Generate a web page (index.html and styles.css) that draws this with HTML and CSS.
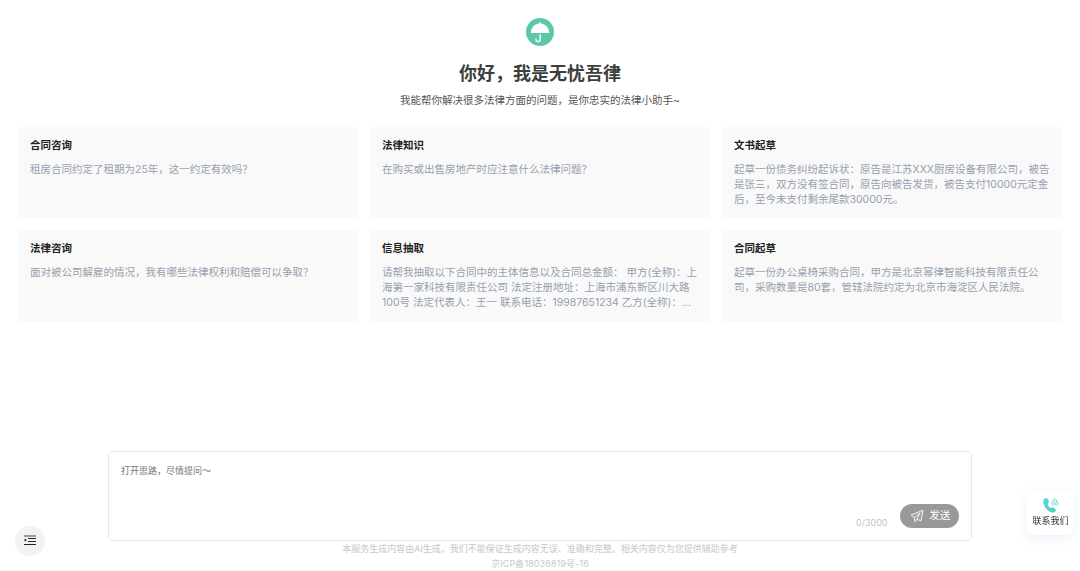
FILE: index.html
```html
<!DOCTYPE html>
<html lang="zh-CN">
<head>
    <meta charset="UTF-8">
    <meta name="viewport" content="width=device-width, initial-scale=1.0">
    <title>无忧吾律</title>
    <link rel="stylesheet" href="styles.css">
</head>
<body>
    <div class="page">
        <header class="intro">
            <svg class="logo" viewBox="0 0 28 28">
                <circle cx="14" cy="14" r="14" fill="#5bc8aa"/>
                <path d="M4.8 15C5 9.4 8.6 5.8 13.3 5.4V4.2h1.4v1.2C19.4 5.8 23 9.4 23.2 15z" fill="#fff"/>
                <path d="M14.2 16.2v5.3a2.1 2.1 0 0 1-4.2 0v-.8" fill="none" stroke="#fff" stroke-width="1.4"/>
            </svg>
            <h1>你好，我是无忧吾律</h1>
            <p>我能帮你解决很多法律方面的问题，是你忠实的法律小助手~</p>
        </header>

        <main class="cards">
            <div class="card">
                <h3>合同咨询</h3>
                <p>租房合同约定了租期为25年，这一约定有效吗？</p>
            </div>
            <div class="card">
                <h3>法律知识</h3>
                <p>在购买或出售房地产时应注意什么法律问题？</p>
            </div>
            <div class="card">
                <h3>文书起草</h3>
                <p>起草一份债务纠纷起诉状：原告是江苏XXX厨房设备有限公司，被告是张三，双方没有签合同，原告向被告发货，被告支付10000元定金后，至今未支付剩余尾款30000元。</p>
            </div>
            <div class="card">
                <h3>法律咨询</h3>
                <p>面对被公司解雇的情况，我有哪些法律权利和赔偿可以争取？</p>
            </div>
            <div class="card">
                <h3>信息抽取</h3>
                <p>请帮我抽取以下合同中的主体信息以及合同总金额： 甲方(全称)：上海第一家科技有限责任公司 法定注册地址：上海市浦东新区川大路100号 法定代表人：王一 联系电话：19987651234 乙方(全称)：...</p>
            </div>
            <div class="card">
                <h3>合同起草</h3>
                <p>起草一份办公桌椅采购合同，甲方是北京幂律智能科技有限责任公司，采购数量是80套，管辖法院约定为北京市海淀区人民法院。</p>
            </div>
        </main>

        <div class="chat-box">
            <textarea placeholder="打开思路，尽情提问～"></textarea>
            <div class="chat-actions">
                <span class="count">0/3000</span>
                <button class="send">
                    <svg viewBox="0 0 14 14" fill="none" stroke="#fff" stroke-width="0.9" stroke-linejoin="round" stroke-linecap="round">
                        <path d="M12.6 1.3L1.2 6.1l3.1 2.6.7 3.9 2-2.2 3.6 1.2z"/>
                        <path d="M9.9 4L4.3 8.7M9.9 4L7 10.4"/>
                    </svg>
                    <span>发送</span>
                </button>
            </div>
        </div>

        <footer>
            <p>本服务生成内容由AI生成，我们不能保证生成内容无误、准确和完整。相关内容仅为您提供辅助参考</p>
            <p class="icp">京ICP备18036819号-16</p>
        </footer>
    </div>

    <button class="menu-toggle">
        <svg viewBox="0 0 12 12">
            <path d="M0 0h12v2H0z" fill="#999"/>
            <path d="M4 3.5h8M4 6.5h8M0 9.5h12" stroke="#222" stroke-width="1"/>
            <path d="M.6 3.4v3.4L3 5.1z" fill="#222"/>
        </svg>
    </button>

    <div class="contact">
        <svg viewBox="0 0 14 14">
            <defs>
                <linearGradient id="phone" x1="0" y1="0" x2="1" y2="1">
                    <stop offset="0" stop-color="#56d4e6"/>
                    <stop offset="1" stop-color="#57cdb0"/>
                </linearGradient>
            </defs>
            <path d="M1.2.7C2.6-.4 4 0 4.6 1.3l.8 1.8c.4.9-.2 1.5-.8 2.1-.5.6 0 1.5.8 2.6s1.6 1.7 2.3 1.4c.8-.4 1.5-.7 2.2-.2l1.4 1c1.2.9.8 2.3-.5 3.1-1.8 1.3-5.4 0-7.9-3.2S-.8 2.5 1.2.7z" fill="url(#phone)"/>
            <path d="M8 4.4c.9.3 1.4 1 1.3 2M8.9 2.5c1.8.6 2.7 2.1 2.3 4.1M9.9.7c2.8 1.1 4 3.3 3.3 6.1" fill="none" stroke="#6bd8d5" stroke-width="1" stroke-linecap="round"/>
        </svg>
        <span>联系我们</span>
    </div>
</body>
</html>
```
FILE: styles.css
```css
* {
    margin: 0;
    padding: 0;
    box-sizing: border-box;
}

body {
    font-family: Inter, "Noto Sans CJK SC", sans-serif;
    background: #fff;
    color: #333;
    overflow: hidden;
}

.page {
    height: 571px;
    padding: 18px 18px 0;
    display: flex;
    flex-direction: column;
}

.intro {
    display: flex;
    flex-direction: column;
    align-items: center;
}

.logo {
    width: 28px;
    height: 28px;
}

.intro h1 {
    margin-top: 15px;
    font-size: 18px;
    line-height: 26px;
    font-weight: 700;
    color: #3b3f3d;
}

.intro p {
    margin-top: 6px;
    font-size: 10.5px;
    line-height: 16px;
    color: #555;
}

.cards {
    margin-top: 17.5px;
    display: grid;
    grid-template-columns: repeat(3, 1fr);
    grid-auto-rows: 91.5px;
    gap: 12px;
}

.card {
    background: #f9f9f9;
    border-radius: 4px;
    padding: 11px 12px;
}

.card h3 {
    font-size: 10.5px;
    line-height: 16px;
    font-weight: 700;
    color: #222;
}

.card p {
    margin-top: 8px;
    font-size: 10.5px;
    line-height: 15px;
    color: #95a0ae;
}

.chat-box {
    width: 864px;
    height: 90px;
    margin: auto auto 0;
    padding: 12px;
    border: 1px solid #e9e9e9;
    border-radius: 5px;
    display: flex;
    flex-direction: column;
}

.chat-box textarea {
    flex: 1;
    border: none;
    outline: none;
    resize: none;
    font-family: inherit;
    font-size: 9px;
    line-height: 14px;
    background: transparent;
}

.chat-box textarea::placeholder {
    color: #757575;
}

.chat-actions {
    display: flex;
    justify-content: flex-end;
    align-items: flex-end;
    gap: 12px;
}

.count {
    font-size: 9px;
    line-height: 11px;
    color: #c5c5c5;
}

.send {
    width: 59.5px;
    height: 24px;
    border: none;
    border-radius: 12px;
    background: #999;
    color: #fff;
    font-family: inherit;
    font-size: 10.5px;
    line-height: 16px;
    padding: 0 0 1px 2px;
    display: flex;
    align-items: center;
    justify-content: center;
    gap: 5px;
}

.send svg {
    width: 14px;
    height: 14px;
}

footer {
    height: 30px;
    text-align: center;
    font-size: 9px;
    line-height: 15px;
    color: #c8c8c8;
}

.icp {
    letter-spacing: 0.1px;
}

.menu-toggle {
    position: fixed;
    left: 15px;
    bottom: 15px;
    width: 30px;
    height: 30px;
    border: none;
    border-radius: 50%;
    background: #f2f2f2;
    display: flex;
    align-items: center;
    justify-content: center;
}

.menu-toggle svg {
    width: 12px;
    height: 12px;
}

.contact {
    position: fixed;
    right: 7px;
    bottom: 36px;
    width: 46px;
    height: 45px;
    border-radius: 5px;
    background: #fff;
    box-shadow: 0 3px 12px rgba(100, 150, 220, 0.13);
    display: flex;
    flex-direction: column;
    align-items: center;
    padding: 8px 0 0 1px;
}

.contact svg {
    width: 15px;
    height: 15px;
}

.contact span {
    font-size: 9px;
    line-height: 15px;
    color: #333;
}
```
